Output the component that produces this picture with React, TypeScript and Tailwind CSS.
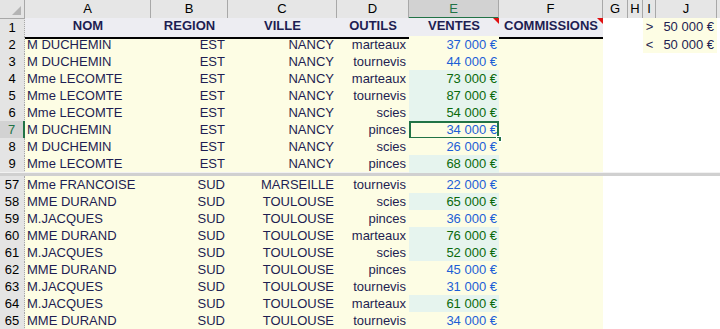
import React from "react";

const GRID =
  "grid grid-cols-[25px_126px_77px_109px_72px_90px_104px_25px_15px_13px_61px_1fr]";

const YEL = "bg-[#fdfde4]";
const GRN = "bg-[#e6f4ee]";
const NAVY = "text-[#1e1e52]";

type R = [number, string, string, string, string, number];

const top: R[] = [
  [2, "M DUCHEMIN", "EST", "NANCY", "marteaux", 37000],
  [3, "M DUCHEMIN", "EST", "NANCY", "tournevis", 44000],
  [4, "Mme LECOMTE", "EST", "NANCY", "marteaux", 73000],
  [5, "Mme LECOMTE", "EST", "NANCY", "tournevis", 87000],
  [6, "Mme LECOMTE", "EST", "NANCY", "scies", 54000],
  [7, "M DUCHEMIN", "EST", "NANCY", "pinces", 34000],
  [8, "M DUCHEMIN", "EST", "NANCY", "scies", 26000],
  [9, "Mme LECOMTE", "EST", "NANCY", "pinces", 68000],
];

const bottom: R[] = [
  [57, "Mme FRANCOISE", "SUD", "MARSEILLE", "tournevis", 22000],
  [58, "MME DURAND", "SUD", "TOULOUSE", "scies", 65000],
  [59, "M.JACQUES", "SUD", "TOULOUSE", "pinces", 36000],
  [60, "MME DURAND", "SUD", "TOULOUSE", "marteaux", 76000],
  [61, "M.JACQUES", "SUD", "TOULOUSE", "scies", 52000],
  [62, "MME DURAND", "SUD", "TOULOUSE", "pinces", 45000],
  [63, "M.JACQUES", "SUD", "TOULOUSE", "tournevis", 31000],
  [64, "M.JACQUES", "SUD", "TOULOUSE", "marteaux", 61000],
  [65, "MME DURAND", "SUD", "TOULOUSE", "tournevis", 34000],
];

const fmt = (n: number) =>
  `${Math.floor(n / 1000)} ${String(n % 1000).padStart(3, "0")} €`;

function RowLabel({ n, selected }: { n: number; selected?: boolean }) {
  return (
    <div
      className={
        selected
          ? "flex items-center justify-center bg-[#d2d2d2] text-[#217346] border-r-2 border-r-[#217346] border-b border-b-[#c8c8c8]"
          : "flex items-center justify-center bg-[#e4e4e4] text-black border-r border-r-[#a8a8a8] border-b border-dotted border-b-[#b8b8b8]"
      }
    >
      {n}
    </div>
  );
}

function RedTri() {
  return (
    <span className="absolute right-0 top-0 w-0 h-0 border-l-[6px] border-l-transparent border-t-[6px] border-t-[#e01010]" />
  );
}

function DataRow({ r, yellowIJ }: { r: R; yellowIJ?: boolean }) {
  const [n, nom, reg, ville, outil, v] = r;
  const big = v > 50000;
  const sel = n === 7;
  return (
    <div className={`${GRID} h-[17px] leading-[17px]`}>
      <RowLabel n={n} selected={sel} />
      <div className={`${YEL} ${NAVY} pl-[2px] whitespace-nowrap`}>{nom}</div>
      <div className={`${YEL} ${NAVY} text-right pr-[3px]`}>{reg}</div>
      <div className={`${YEL} ${NAVY} text-right pr-[3px]`}>{ville}</div>
      <div className={`${YEL} ${NAVY} text-right pr-[3px]`}>{outil}</div>
      <div
        className={`relative ${big ? GRN + " text-[#0b6a0b]" : YEL + " text-[#1d5fd6]"} text-right pr-[2px] whitespace-nowrap`}
      >
        {fmt(v)}
        {sel && (
          <>
            <span className="absolute inset-0 border-2 border-[#217346]" />
            <span className="absolute right-[-3px] bottom-[-3px] w-[6px] h-[6px] bg-[#217346] border border-white" />
          </>
        )}
      </div>
      <div className={YEL} />
      <div className="bg-white" />
      <div className="bg-white" />
      <div className={yellowIJ ? `${YEL} ${NAVY} text-center` : "bg-white"}>
        {yellowIJ ? (n === 2 ? "<" : "") : ""}
      </div>
      <div className={yellowIJ ? `${YEL} ${NAVY} text-right pr-[3px]` : "bg-white"}>
        {yellowIJ ? "50 000 €" : ""}
      </div>
      <div className="bg-white" />
    </div>
  );
}

export default function App() {
  const letters = ["A", "B", "C", "D", "E", "F", "G", "H", "I", "J"];
  return (
    <div className="w-[720px] h-[329px] overflow-hidden bg-white font-['Liberation_Sans',Arial,sans-serif] text-[13px] select-none">
      {/* column letters */}
      <div className={`${GRID} h-[18px] leading-[17px] text-black`}>
        <div className="relative bg-[#e4e4e4] border-r border-r-[#a8a8a8] border-b border-b-[#a8a8a8]">
          <span className="absolute right-[3px] bottom-[3px] w-0 h-0 border-l-[9px] border-l-transparent border-b-[9px] border-b-[#b4b4b4]" />
        </div>
        {letters.map((l) => (
          <div
            key={l}
            className={
              l === "E"
                ? "text-center bg-[#d2d2d2] text-[#217346] border-r border-r-[#a8a8a8] border-b-2 border-b-[#217346]"
                : "text-center bg-[#e6e6e6] border-r border-r-[#a8a8a8] border-b border-b-[#a8a8a8]"
            }
          >
            {l}
          </div>
        ))}
        <div className="bg-[#e6e6e6] border-b border-b-[#a8a8a8]" />
      </div>

      {/* row 1 */}
      <div className={`${GRID} h-[18px]`}>
        <RowLabel n={1} />
        {["NOM", "REGION", "VILLE", "OUTILS", "VENTES", "COMMISSIONS"].map((h) => (
          <div
            key={h}
            className={`relative bg-[#ededf2] ${NAVY} font-bold text-center leading-[16px] border-b-2 border-b-black whitespace-nowrap`}
          >
            {h}
            {(h === "VENTES" || h === "COMMISSIONS") && <RedTri />}
          </div>
        ))}
        <div className="bg-white" />
        <div className="bg-white" />
        <div className={`${YEL} ${NAVY} text-center leading-[18px]`}>&gt;</div>
        <div className={`${YEL} ${NAVY} text-right pr-[3px] leading-[18px]`}>50 000 €</div>
        <div className="bg-white" />
      </div>

      {top.map((r) => (
        <DataRow key={r[0]} r={r} yellowIJ={r[0] === 2} />
      ))}

      {/* split bar */}
      <div className="h-[4px] flex flex-col">
        <div className="h-[1px] bg-[#f2f2f2]" />
        <div className="h-[3px] bg-[#d0d0d0]" />
      </div>

      {bottom.map((r) => (
        <DataRow key={r[0]} r={r} />
      ))}
    </div>
  );
}
